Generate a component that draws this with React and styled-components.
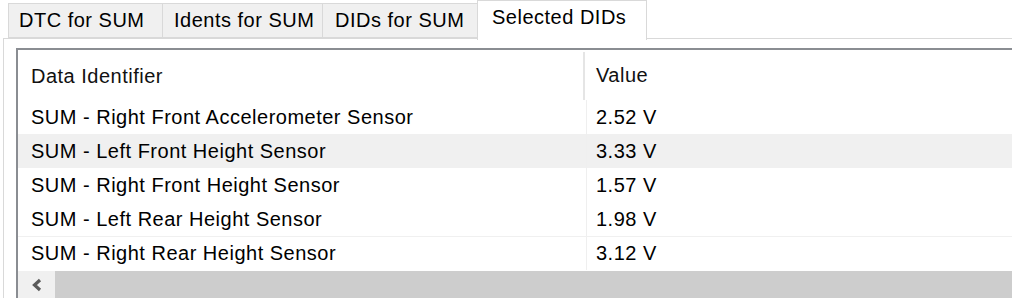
import React from "react";
import styled, { createGlobalStyle } from "styled-components";

const Global = createGlobalStyle`
  html, body { margin: 0; padding: 0; background: #ffffff; }
  body { width: 1012px; height: 298px; overflow: hidden; }
  #root { width: 1012px; height: 298px; overflow: hidden; }
  * { box-sizing: border-box; }
`;

const Window = styled.div`
  width: 1012px;
  height: 298px;
  display: flex;
  flex-direction: column;
  font-family: "Liberation Sans", Arial, sans-serif;
  font-size: 20px;
  letter-spacing: 0.5px;
  color: #000;
  background: #ffffff;
  overflow: hidden;
`;

const TabStrip = styled.div`
  display: flex;
  align-items: flex-start;
  padding-left: 9px;
  height: 39px;
  position: relative;
  z-index: 1;
`;

const Tab = styled.div`
  width: ${(p) => p.$w}px;
  height: ${(p) => (p.$active ? 40 : 35)}px;
  margin-top: ${(p) => (p.$active ? 0 : 3)}px;
  margin-left: -1px;
  background: ${(p) => (p.$active ? "#ffffff" : "#f0f0f0")};
  border: 1px solid #d9d9d9;
  border-bottom: ${(p) => (p.$active ? "none" : "1px solid #d9d9d9")};
  display: flex;
  align-items: ${(p) => (p.$active ? "flex-start" : "center")};
  padding-top: ${(p) => (p.$active ? 5 : 0)}px;
  padding-left: ${(p) => p.$pad}px;
  white-space: nowrap;
  color: #000;
`;

const Panel = styled.div`
  flex: 1;
  margin-left: 3px;
  margin-top: -1px;
  border-top: 1px solid #d9d9d9;
  border-left: 1px solid #d9d9d9;
  padding: 9px 0 0 12px;
  display: flex;
  flex-direction: column;
  min-height: 0;
`;

const ListView = styled.div`
  flex: 1;
  border-top: 2px solid #8a8d92;
  border-left: 2px solid #8a8d92;
  display: flex;
  flex-direction: column;
  min-height: 0;
`;

const HeaderRow = styled.div`
  display: grid;
  grid-template-columns: 567px 1fr;
  height: 50px;
  flex: none;
`;

const HeaderCell = styled.div`
  display: flex;
  align-items: center;
  padding-left: ${(p) => p.$pad}px;
  border-right: ${(p) => (p.$divider ? "2px solid #e5e5e5" : "none")};
  margin: ${(p) => (p.$divider ? "2px 0 0 0" : "0")};
  color: #111;
`;

const Row = styled.div`
  display: grid;
  grid-template-columns: 569px 1fr;
  height: 34px;
  flex: none;
  background: ${(p) => (p.$selected ? "#f0f0f0" : "#ffffff")};
  border-top: ${(p) => (p.$line ? "1px solid #f0f0f0" : "none")};
`;

const Cell = styled.div`
  display: flex;
  align-items: center;
  padding-left: ${(p) => p.$pad}px;
  border-right: ${(p) => (p.$divider ? "1px solid #efefef" : "none")};
  white-space: nowrap;
  color: #000;
`;

const HScroll = styled.div`
  flex: none;
  height: 27px;
  margin-top: auto;
  display: flex;
  background: #cdcdcd;
`;

const ScrollButton = styled.div`
  width: 37px;
  height: 100%;
  background: #f0f0f0;
  display: flex;
  align-items: center;
  justify-content: center;
`;

const tabs = [
  { label: "DTC for SUM", w: 155, pad: 10 },
  { label: "Idents for SUM", w: 161, pad: 11 },
  { label: "DIDs for SUM", w: 156, pad: 12 },
  { label: "Selected DIDs", w: 170, pad: 14, active: true },
];

const rows = [
  ["SUM - Right Front Accelerometer Sensor", "2.52 V"],
  ["SUM - Left Front Height Sensor", "3.33 V", true],
  ["SUM - Right Front Height Sensor", "1.57 V"],
  ["SUM - Left Rear Height Sensor", "1.98 V"],
  ["SUM - Right Rear Height Sensor", "3.12 V", false, true],
];

export default function App() {
  return (
    <Window>
      <Global />
      <TabStrip>
        {tabs.map((t) => (
          <Tab key={t.label} $w={t.w} $pad={t.pad} $active={t.active}>
            {t.label}
          </Tab>
        ))}
      </TabStrip>
      <Panel>
        <ListView>
          <HeaderRow>
            <HeaderCell $pad={13} $divider>
              Data Identifier
            </HeaderCell>
            <HeaderCell $pad={11}>Value</HeaderCell>
          </HeaderRow>
          {rows.map(([name, value, selected, line]) => (
            <Row key={name} $selected={selected} $line={line}>
              <Cell $pad={13} $divider>
                {name}
              </Cell>
              <Cell $pad={9}>{value}</Cell>
            </Row>
          ))}
          <HScroll>
            <ScrollButton>
              <svg width="14" height="14" viewBox="0 0 14 14">
                <polyline
                  points="10,2 4.5,7 10,12"
                  fill="none"
                  stroke="#5a5a5a"
                  strokeWidth="3.2"
                />
              </svg>
            </ScrollButton>
          </HScroll>
        </ListView>
      </Panel>
    </Window>
  );
}
